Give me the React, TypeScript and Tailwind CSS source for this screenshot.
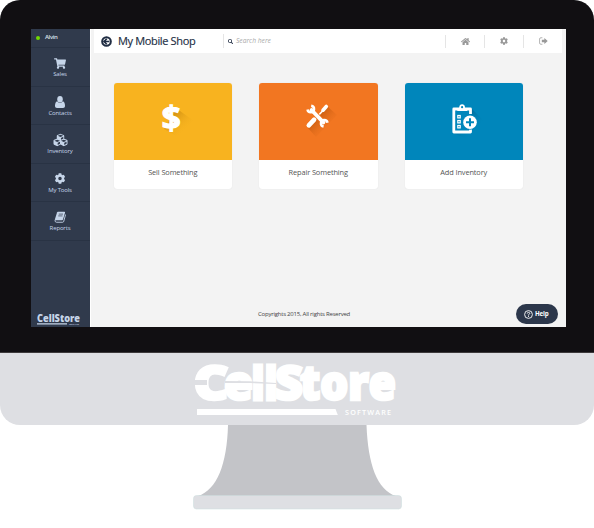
import type { ReactNode } from "react";
import { FaShoppingCart, FaCubes, FaCog, FaHome, FaSearch } from "react-icons/fa";

function BackIcon() {
  return (
    <svg viewBox="0 0 20 20" className="h-[11px] w-[11px]">
      <circle cx="10" cy="10" r="7.800" fill="none" stroke="currentColor" strokeWidth="3.800" />
      <path d="M10.500 5L5.500 10L10.500 15M6 10H15" fill="none" stroke="currentColor" strokeWidth="3" />
    </svg>
  );
}

function UserIcon() {
  return (
    <svg viewBox="0 0 20 24" className="h-[12px] w-[10px]" fill="currentColor">
      <ellipse cx="10" cy="6.500" rx="5.500" ry="6.500" />
      <path d="M4.500 10.500C1.500 11.500 0 15 0 19.500C0 22.500 1.500 24 4 24H16C18.500 24 20 22.500 20 19.500C20 15 18.500 11.500 15.500 10.500C13.800 13 12 13.500 10 13.500S6.200 13 4.500 10.500Z" />
    </svg>
  );
}

function BookIcon() {
  return (
    <svg viewBox="0 0 24 24" className="h-[12px] w-[12px]">
      <path d="M8 1.500H21Q22.500 1.500 22 3.500L18 17Q17.500 18.500 16 18.500H4Q1.500 18.500 2 16L6 3Q6.500 1.500 8 1.500Z" fill="currentColor" />
      <path d="M2 17.500Q1.500 22.500 5 22.500H17.500Q19 22.500 19.500 20.500L23.200 7" fill="none" stroke="currentColor" strokeWidth="1.800" />
      <path d="M9.500 6.200H18M8.500 9.800H17" stroke="#303a4c" strokeWidth="1.400" />
    </svg>
  );
}

function SignOutIcon() {
  return (
    <svg viewBox="0 0 16 14" className="h-[8px] w-[9px]">
      <path d="M6 1.200H3.500Q1 1.200 1 3.500V10.500Q1 12.800 3.500 12.800H6" fill="none" stroke="currentColor" strokeWidth="1.300" />
      <path d="M5 4.800H9.500V1.500L15.500 7L9.500 12.500V9.200H5Z" fill="currentColor" />
    </svg>
  );
}

function DollarArt() {
  return (
    <svg viewBox="0 0 118 76" className="h-[76px] w-[118px]">
      <defs>
        <linearGradient id="sd" x1="0" y1="0" x2="1" y2="1">
          <stop offset="0.200" stopColor="#c98a10" stopOpacity="0.900" />
          <stop offset="0.750" stopColor="#f8b31f" stopOpacity="0" />
        </linearGradient>
      </defs>
      <path d="M62 26L66 28L80 38L64 54L50 46Z" fill="url(#sd)" />
      <text x="57.200" y="46.500" textAnchor="middle" fontSize="32" fontWeight="700" stroke="#fff" strokeWidth="1.300" fill="#fff" className="font-['Open_Sans',sans-serif]" textLength="19" lengthAdjust="spacingAndGlyphs">$</text>
    </svg>
  );
}

function ToolsArt() {
  return (
    <svg viewBox="0 0 118 76" className="h-[76px] w-[118px]">
      <defs>
        <linearGradient id="st" x1="0" y1="0" x2="1" y2="1">
          <stop offset="0.300" stopColor="#b9540c" stopOpacity="0.750" />
          <stop offset="0.800" stopColor="#f27621" stopOpacity="0" />
        </linearGradient>
      </defs>
      <path d="M68 23L78 32L57 54L49 45Z" fill="url(#st)" />
      <g stroke="#fff" fill="none" strokeLinecap="round">
        <path d="M49.800 42.300L55.200 36.600" strokeWidth="4.600" />
        <path d="M56.500 35.500L64 27.500" strokeWidth="1.700" />
        <path d="M64 27.200L67.300 23.500" strokeWidth="3.600" />
        <path d="M53 27.500L64 39" stroke="#f27621" strokeWidth="5.400" strokeLinecap="butt" />
        <path d="M52.500 27L64.500 39.500" strokeWidth="3.800" />
        <path d="M52.200 22.700A3.300 3.300 0 1 1 48.500 26.500" strokeWidth="2.500" strokeLinecap="butt" />
        <path d="M64.600 43.600A3.300 3.300 0 1 1 68.500 39.800" strokeWidth="2.500" strokeLinecap="butt" />
      </g>
    </svg>
  );
}

function ClipboardArt() {
  return (
    <svg viewBox="0 0 118 76" className="h-[76px] w-[118px]">
      <defs>
        <linearGradient id="sc" x1="0" y1="0" x2="1" y2="1">
          <stop offset="0.300" stopColor="#005c86" stopOpacity="0.700" />
          <stop offset="0.750" stopColor="#0086bb" stopOpacity="0" />
        </linearGradient>
      </defs>
      <path d="M66 25L78 37L62 56L48 50Z" fill="url(#sc)" />
      <path d="M65.500 31V26H48.800V49H65.500V45" fill="#0086bb" stroke="#fff" strokeWidth="2.800" strokeLinejoin="round" />
      <path d="M52.300 28V25.200H54.300A2.800 2.800 0 0 1 59.900 25.200H62.300V28Z" fill="#fff" />
      <circle cx="57.100" cy="24" r="2.700" fill="#fff" />
      <circle cx="57.100" cy="24.200" r="1.100" fill="#0086bb" />
      <g fill="none" stroke="#fff" strokeWidth="1.200">
        <rect x="52.800" y="32.500" width="2.400" height="2.400" />
        <rect x="52.800" y="37.500" width="2.400" height="2.400" />
        <rect x="52.800" y="42.500" width="2.400" height="2.400" />
      </g>
      <circle cx="65" cy="39.200" r="7.600" fill="#0086bb" />
      <circle cx="65" cy="39.200" r="6.800" fill="#fff" />
      <path d="M65 35.200V43.200M61 39.200H69" stroke="#0086bb" strokeWidth="2" />
    </svg>
  );
}

function BrandLogo() {
  return (
    <svg viewBox="0 0 214 72" className="h-[72px] w-[214px] font-['Open_Sans',sans-serif]" fill="#fff">
      <g fontSize="47" fontWeight="800" stroke="#fff" strokeWidth="2.600">
        <text x="3.500" y="46.500" textLength="35" lengthAdjust="spacingAndGlyphs">C</text>
        <text x="34" y="46.500" textLength="29" lengthAdjust="spacingAndGlyphs">e</text>
        <text x="85" y="46.500" textLength="28" lengthAdjust="spacingAndGlyphs">S</text>
        <text x="110" y="46.500" textLength="96" lengthAdjust="spacingAndGlyphs">tore</text>
      </g>
      <text x="61.500" y="47" fontSize="46" fontWeight="800" stroke="#fff" strokeWidth="2.800" textLength="26" lengthAdjust="spacingAndGlyphs">ll</text>
      <path d="M2 27H17V32H2ZM35 28L60 28.300L86 30V31L60 30L35 30Z" fill="#dedfe3" />
      <path d="M75 9L74.300 49" stroke="#dedfe3" strokeWidth="1" />
      <path d="M7 56H145.500L147.800 62H7Z" />
      <text x="155" y="62" fontSize="7.200" fontWeight="600" textLength="46" className="font-['Open_Sans',sans-serif]">SOFTWARE</text>
    </svg>
  );
}

function SideItem({ icon, label }: { icon: ReactNode; label: string }) {
  return (
    <div className="flex h-[38.500px] flex-col items-center border-b border-[#293344] pt-[9px] pr-[1px] text-[#c6d5e9]">
      <div className="flex h-[12px] items-center text-[12px]">{icon}</div>
      <span className="mt-[1px] text-[6px] leading-[8px] tracking-[-0.150px]">{label}</span>
    </div>
  );
}

function Card({ art, label, color }: { art: ReactNode; label: string; color: string }) {
  return (
    <div className="h-[106px] w-[118.500px] overflow-hidden rounded-[3px] bg-white shadow-[0_0_1px_#d8d8d8]">
      <div className={`h-[76.500px] ${color}`}>{art}</div>
      <div className="pt-[7px] text-center text-[7.400px] leading-[11px] tracking-[-0.120px] text-[#555]">{label}</div>
    </div>
  );
}

export default function App() {
  return (
    <main className="flex h-[528px] w-[594px] flex-col items-center overflow-hidden bg-white font-['Open_Sans','Noto_Sans',sans-serif]">
      <section className="flex h-[425px] w-full flex-col overflow-hidden rounded-[20px] bg-[#dedfe3]">
        <div className="h-[353px] shrink-0 border-b border-[#3d3a3c] bg-[#110f12] pt-[29px] pl-[31px]">
          <div className="flex h-[298px] w-[535px] bg-[#f3f3f3]">
            <aside className="flex w-[59px] shrink-0 flex-col bg-[#303a4c]">
              <div className="flex h-[19px] items-center border-b border-[#293344] pb-[1px] pl-[5px]">
                <i className="h-[4px] w-[4px] rounded-full bg-[#72d900]" />
                <span className="ml-[5px] text-[6px] font-semibold tracking-[-0.350px] text-[#d9e0ea]">Alvin</span>
              </div>
              <SideItem icon={<FaShoppingCart className="h-[11px]" />} label="Sales" />
              <SideItem icon={<UserIcon />} label="Contacts" />
              <SideItem icon={<FaCubes className="h-[14px] w-[15px]" />} label="Inventory" />
              <SideItem icon={<FaCog className="h-[11px]" />} label="My Tools" />
              <SideItem icon={<BookIcon />} label="Reports" />
              <svg viewBox="0 0 50 18" className="mt-auto ml-[5px] h-[18px] w-[50px] font-['Open_Sans',sans-serif]" fill="#c6d5e9">
                <text x="1" y="12.500" fontSize="10.500" fontWeight="800" textLength="43" lengthAdjust="spacingAndGlyphs">CellStore</text>
                <path d="M1 14.200H31V15.600H1Z" />
                <text x="33" y="16" fontSize="2.300" textLength="10">SOFTWARE</text>
              </svg>
            </aside>
            <div className="flex grow flex-col border-l border-white pr-[4px] pl-[3px]">
              <header className="flex h-[24px] shrink-0 items-center bg-white pl-[7px] text-[#202d43]">
                <BackIcon />
                <h1 className="ml-[6px] w-[105px] text-[11px] leading-[14px] tracking-[-0.350px] whitespace-nowrap [-webkit-text-stroke:0.150px_#202d43]">My Mobile Shop</h1>
                <div className="flex h-[14px] grow items-center border-l border-[#e5e5e5] pl-[4px]">
                  <FaSearch className="h-[5px] w-[5px]" />
                  <span className="ml-[3px] text-[6.700px] text-[#aaa] italic">Search here</span>
                </div>
                <nav className="flex text-[#999]">
                  <div className="flex h-[13px] w-[39px] items-center justify-center border-l border-[#e5e5e5]"><FaHome className="h-[9px] w-[9px]" /></div>
                  <div className="flex h-[13px] w-[39px] items-center justify-center border-l border-[#e5e5e5]"><FaCog className="h-[8px] w-[8px]" /></div>
                  <div className="flex h-[13px] w-[39px] items-center justify-center border-l border-[#e5e5e5]"><SignOutIcon /></div>
                </nav>
              </header>
              <div className="mt-[30px] ml-[19.500px] flex gap-[27px]">
                <Card art={<DollarArt />} label="Sell Something" color="bg-[#f8b31f]" />
                <Card art={<ToolsArt />} label="Repair Something" color="bg-[#f27621]" />
                <Card art={<ClipboardArt />} label="Add Inventory" color="bg-[#0086bb]" />
              </div>
              <footer className="mt-auto mb-[3px] flex h-[20px] items-center">
                <span className="ml-[164px] grow text-[6px] tracking-[-0.220px] whitespace-nowrap text-[#444]">Copyrights 2015, All rights Reserved</span>
                <button className="mr-[4px] flex h-[20px] w-[42px] items-center rounded-full bg-[#2c374b] pl-[8px] text-white">
                  <svg viewBox="0 0 18 18" className="h-[9px] w-[9px]" fill="none" stroke="currentColor" strokeWidth="1.800">
                    <circle cx="9" cy="9" r="7.800" />
                    <path d="M6.500 7Q6.500 4.800 9 4.800T11.500 7Q11.500 8.200 9 9.500V11M9 12.200V14" />
                  </svg>
                  <span className="ml-[2px] text-[6.200px] font-bold tracking-[-0.150px]">Help</span>
                </button>
              </footer>
            </div>
          </div>
        </div>
        <div className="flex h-[72px] justify-center">
          <BrandLogo />
        </div>
      </section>
      <svg viewBox="0 0 210 86" className="h-[86px] w-[210px]">
        <path d="M36 0C35 39 25 65 6 71H204C185 65 176 39 174.500 0Z" fill="#c3c4c8" />
        <rect x="1.500" y="70.500" width="208" height="13.500" rx="3" fill="#dedfe3" stroke="#cadcdd" strokeWidth="0.500" />
      </svg>
    </main>
  );
}
